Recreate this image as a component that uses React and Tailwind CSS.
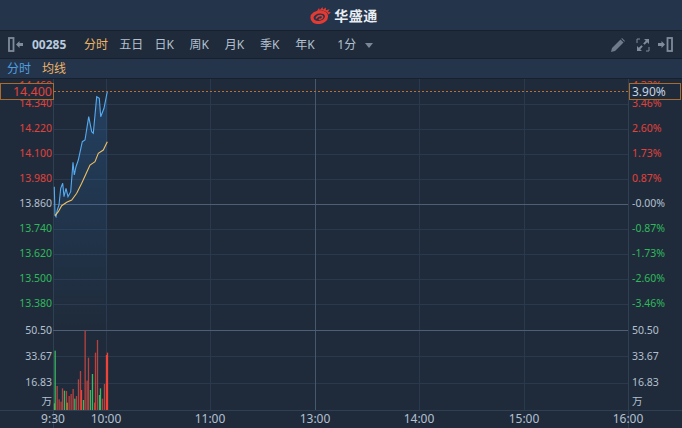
const sans = { fontFamily: '"Noto Sans", "Noto Sans CJK SC", sans-serif' };

const TABS = ["分时", "五日", "日K", "周K", "月K", "季K", "年K"];

const PRICE_LABELS = [
  ["14.460", 85, "#e0423c"],
  ["14.340", 103, "#e0423c"],
  ["14.220", 128, "#e0423c"],
  ["14.100", 153, "#e0423c"],
  ["13.980", 178, "#e0423c"],
  ["13.860", 203, "#b4c0d0"],
  ["13.740", 228, "#2fb95c"],
  ["13.620", 253, "#2fb95c"],
  ["13.500", 278, "#2fb95c"],
  ["13.380", 303, "#2fb95c"],
];
const PCT_LABELS = [
  ["4.32%", 85, "#e0423c"],
  ["3.46%", 103, "#e0423c"],
  ["2.60%", 128, "#e0423c"],
  ["1.73%", 153, "#e0423c"],
  ["0.87%", 178, "#e0423c"],
  ["-0.00%", 203, "#b4c0d0"],
  ["-0.87%", 228, "#2fb95c"],
  ["-1.73%", 253, "#2fb95c"],
  ["-2.60%", 278, "#2fb95c"],
  ["-3.46%", 303, "#2fb95c"],
];
const VOL_LABELS = [["50.50", 330], ["33.67", 356], ["16.83", 382], ["万", 401]];
const TIMES = [["9:30", 53], ["10:00", 106], ["11:00", 210], ["13:00", 315], ["14:00", 419], ["15:00", 524], ["16:00", 628]];

const GRID_Y = [104, 129, 154, 179, 229, 254, 279, 304];
const GRID_X = [106.5, 210.5, 419.5, 524.5];

// traced at 3x from the crop starting at (40,85)
const trace = (pts) => pts.map(([x, y]) => `${(40 + x / 3).toFixed(1)},${(85 + y / 3).toFixed(1)}`).join(" ");
const BLUE = [[43,305],[45,390],[48,395],[52,375],[57,360],[62,310],[68,295],[72,335],[78,310],[84,335],[92,320],[99,232],[103,270],[108,245],[115,225],[127,170],[135,165],[146,95],[155,140],[160,145],[170,35],[178,40],[182,95],[192,70],[202,20]];
const YELLOW = [[45,392],[55,380],[65,362],[80,352],[95,345],[110,325],[125,295],[140,262],[150,240],[165,230],[175,205],[190,195],[202,170]];

const G = "#3bb862", R = "#f0443a", D = "#b8423f", Y = "#a8923f";
const BARS = [[163,250,Y],[165,92,G],[171,198,D],[177,238,D],[183,245,D],[187,205,D],[193,212,G],[199,213,D],[201,248,Y],[207,228,D],[213,222,D],[219,207,D],[224,236,G],[229,228,D],[235,178,D],[241,153,D],[244,210,R],[250,240,G],[255,32,D],[261,182,D],[265,113,D],[271,210,G],[277,162,G],[284,248,R],[286,98,D],[292,60,D],[298,225,G],[301,205,G],[307,236,D],[313,192,D],[319,105,R],[322,98,R]];

function PanelIcon({ flip }) {
  return (
    <svg width="16" height="15" viewBox="0 0 16 15" style={flip ? { transform: "scaleX(-1)" } : undefined}>
      <rect x="1" y="1" width="4.500" height="13" fill="none" stroke="#7f8b9b" strokeWidth="1.800" />
      <path d="M8 7.500l3.500-3.500v2h3.500v3h-3.500v2z" fill="#7f8b9b" />
    </svg>
  );
}

function Logo() {
  return (
    <svg width="22" height="17" viewBox="0 0 22 17">
      <path d="M2 10.500C2 7.500 6 5 10 5c4 0 6.500 1.700 6.500 4.500 0 3.500-4 6-8 6C4.500 15.500 2 13.500 2 10.500z" fill="none" stroke="#e23b33" strokeWidth="3.200" />
      <path d="M6 11.500c1-2 2.500-3 4.500-3 2 0 2.500 1 2 2.200-.8 1.400-2.800 2-3.600 1" fill="none" stroke="#e23b33" strokeWidth="1.500" />
      <path d="M7 4L9 1l.8 2L12.500 0l.5 2.500L16 .5l-.2 2.700 3.700-1-1.500 2.800 3 .2-2.500 2.300-1.700-2.500-4-1.500z" fill="#e23b33" />
    </svg>
  );
}

function Chart() {
  return (
    <svg width="682" height="349" viewBox="0 79 682 349" className="block" style={sans}>
      <defs>
        <linearGradient id="area" x1="0" y1="0" x2="0" y2="1">
          <stop offset="0" stopColor="#2c6cb0" stopOpacity="0.32" />
          <stop offset="1" stopColor="#2c6cb0" stopOpacity="0" />
        </linearGradient>
      </defs>
      {GRID_Y.map((y) => (
        <line key={y} x1="53" x2="628" y1={y + 0.5} y2={y + 0.5} stroke="#2a3a4e" />
      ))}
      {[356.5, 383.5].map((y) => (
        <line key={y} x1="53" x2="628" y1={y} y2={y} stroke="#2a3a4e" />
      ))}
      {GRID_X.map((x) => (
        <line key={x} x1={x} x2={x} y1="79" y2="410" stroke="#2a3a4e" />
      ))}
      <line x1="53.5" x2="53.5" y1="79" y2="428" stroke="#2f4055" />
      <line x1="628.5" x2="628.5" y1="79" y2="428" stroke="#2f4055" />
      <line x1="315.5" x2="315.5" y1="79" y2="410" stroke="#46586e" />
      <line x1="53" x2="628" y1="204.5" y2="204.5" stroke="#4d5f76" />
      <line x1="53" x2="628" y1="330.5" y2="330.5" stroke="#4d5f76" />
      <line x1="0" x2="682" y1="410.5" y2="410.5" stroke="#2f4055" />

      <polygon points={`54,330 ${trace(BLUE)} 107,330`} fill="url(#area)" />
      <polyline points={trace(BLUE)} fill="none" stroke="#56aaf0" strokeWidth="1.100" />
      <polyline points={trace(YELLOW)} fill="none" stroke="#eebf62" strokeWidth="1.100" />

      {BARS.map(([x, top, c], i) => (
        <rect key={i} x={x / 3 - 0.5} y={320 + top / 3} width="1.300" height={90 - top / 3} fill={c} />
      ))}

      <line x1="54" x2="628" y1="91.500" y2="91.500" stroke="#b8702c" strokeDasharray="2 2" />

      {PRICE_LABELS.map(([t, y, c]) => (
        <text key={t} x="52" y={y + 4} textAnchor="end" fontSize="10.500" fill={c}>{t}</text>
      ))}
      {PCT_LABELS.map(([t, y, c]) => (
        <text key={t} x="632" y={y + 4} fontSize="10.500" fill={c}>{t}</text>
      ))}
      {VOL_LABELS.map(([t, y]) => (
        <text key={t} x="52" y={y + 4} textAnchor="end" fontSize="10.500" fill="#b4c0d0">{t}</text>
      ))}
      {VOL_LABELS.map(([t, y]) => (
        <text key={t + "r"} x="632" y={y + 4} fontSize="10.500" fill="#b4c0d0">{t}</text>
      ))}
      {TIMES.map(([t, x]) => (
        <text key={t} x={x} y="423" textAnchor="middle" fontSize="12" fill="#b4c0d0">{t}</text>
      ))}

      <rect x="0.500" y="83.500" width="53" height="16" fill="#1f2b3a" stroke="#a86c30" />
      <text x="52" y="96" textAnchor="end" fontSize="12.500" fill="#e0423c">14.400</text>
      <rect x="629.500" y="83.500" width="51" height="16" fill="#1f2b3a" stroke="#a86c30" />
      <text x="632" y="96" fontSize="12" fill="#c4d2e4">3.90%</text>
    </svg>
  );
}

export default function App() {
  return (
    <div className="w-[682px] h-[428px] overflow-hidden bg-[#1f2b3a] text-[#b4c0d0]" style={sans}>
      <div className="h-[30px] bg-[#24344a] flex items-center justify-center gap-[2px] pl-[6px]">
        <Logo />
        <span className="text-[14px] font-bold text-[#e8edf3] tracking-[0.5px]">华盛通</span>
      </div>
      <div className="h-[29px] border-y border-[#17212d] flex items-center pl-[8px] pr-[9px] text-[12px]">
        <div className="w-[76px] flex items-center">
          <PanelIcon />
          <span className="ml-[8px] font-bold text-[12px] text-[#b9c9de]">00285</span>
        </div>
        <div className="flex">
          {TABS.map((t, i) => (
            <span key={t} className={`w-[35.200px] ${i === 0 ? "text-[#eeb468]" : ""}`}>
              {t}
            </span>
          ))}
        </div>
        <span className="ml-[7px]">1分</span>
        <span className="ml-[9px] mt-[1px] w-0 h-0 border-x-[4px] border-x-transparent border-t-[5px] border-t-[#7b8797]" />
        <div className="ml-auto flex items-center">
          <svg width="14" height="14" viewBox="0 0 14 14">
            <path d="M0 14l1-4L9.500 1.500l3 3L4 13z M10.300.7l.7-.7 3 3-.7.7z" fill="#6f7b8b" />
          </svg>
          <svg width="14" height="14" viewBox="0 0 14 14" className="ml-[11px] mr-[7px]">
            <path d="M8 1h5v5l-1.800-1.800L8.600 6.800 7.200 5.400l2.600-2.600z M6 13H1V8l1.800 1.800 2.600-2.600 1.400 1.400-2.600 2.600z" fill="#7f8b9b" />
            <path d="M1 5V1h3M13 9v4h-3" fill="none" stroke="#7f8b9b" strokeWidth="1" />
          </svg>
          <PanelIcon flip />
        </div>
      </div>
      <div className="h-[20px] bg-[#24344a] border-b border-[#17212d] flex items-center pl-[7px] gap-[11px] text-[12px]">
        <span className="text-[#4f9fe0]">分时</span>
        <span className="text-[#eeb468]">均线</span>
      </div>
      <Chart />
    </div>
  );
}
